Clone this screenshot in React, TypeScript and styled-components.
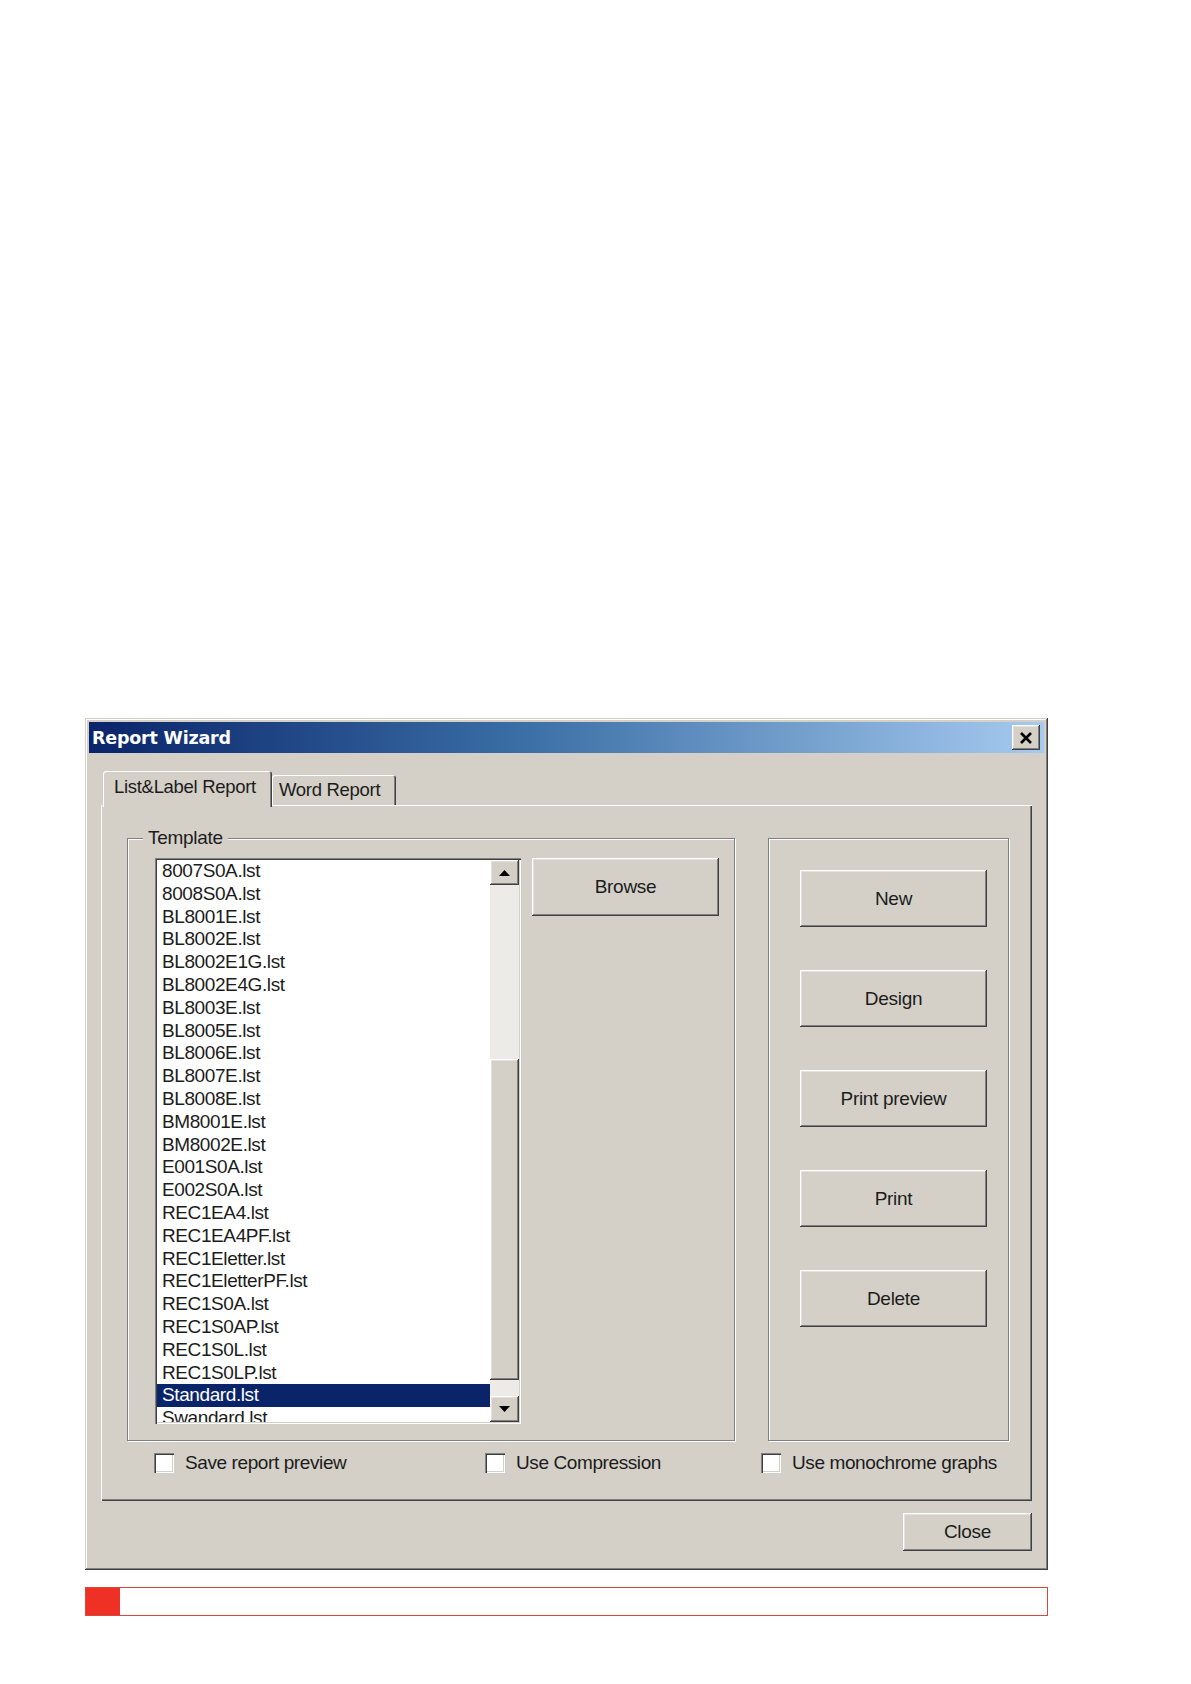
import React from 'react';
import styled, {createGlobalStyle} from 'styled-components';

const templates = [
    '8007S0A.lst',
    '8008S0A.lst',
    'BL8001E.lst',
    'BL8002E.lst',
    'BL8002E1G.lst',
    'BL8002E4G.lst',
    'BL8003E.lst',
    'BL8005E.lst',
    'BL8006E.lst',
    'BL8007E.lst',
    'BL8008E.lst',
    'BM8001E.lst',
    'BM8002E.lst',
    'E001S0A.lst',
    'E002S0A.lst',
    'REC1EA4.lst',
    'REC1EA4PF.lst',
    'REC1Eletter.lst',
    'REC1EletterPF.lst',
    'REC1S0A.lst',
    'REC1S0AP.lst',
    'REC1S0L.lst',
    'REC1S0LP.lst',
    'Standard.lst',
    'Swandard.lst',
];

const actions = ['New', 'Design', 'Print preview', 'Print', 'Delete'];

const raised = `
  background: #d4d0c8;
  box-shadow: inset -1px -1px 0 #404040, inset 1px 1px 0 #ffffff,
    inset -2px -2px 0 #808080, inset 2px 2px 0 #e4e1da;
`;

const GlobalStyle = createGlobalStyle`
  body {
    margin: 0;
    background: #ffffff;
    font-family: "Liberation Sans", Arial, sans-serif;
    color: #1c1c1c;
  }
`;

const Page = styled.div`
  padding: 718px 0 60px 85px;
`;

const Window = styled.div`
  width: 963px;
  box-sizing: border-box;
  padding: 4px;
  background: #d4d0c8;
  box-shadow: inset -1px -1px 0 #404040, inset 1px 1px 0 #d4d0c8,
    inset -2px -2px 0 #808080, inset 2px 2px 0 #ffffff;
`;

const TitleBar = styled.div`
  height: 31px;
  display: flex;
  align-items: center;
  justify-content: space-between;
  padding: 0 4px 0 3px;
  background: linear-gradient(90deg, #0a246a 0%, #3a6ea5 45%, #a6caf0 100%);
`;

const TitleText = styled.span`
  color: #ffffff;
  font-family: "DejaVu Sans", Verdana, sans-serif;
  font-weight: bold;
  font-size: 17.5px;
  letter-spacing: -0.2px;
`;

const CloseIcon = styled.div`
  ${raised};
  width: 28px;
  height: 25px;
  display: flex;
  align-items: center;
  justify-content: center;
`;

const Body = styled.div`
  padding: 18px 12px 15px 12px;
`;

const TabStrip = styled.div`
  position: relative;
  z-index: 1;
  display: flex;
  align-items: flex-end;
  height: 34px;
  padding-left: 2px;
`;

const Tab = styled.div<{$active?: boolean; $width: number; $pad: number}>`
  width: ${(p) => p.$width}px;
  height: ${(p) => (p.$active ? 36 : 30)}px;
  margin-bottom: ${(p) => (p.$active ? -2 : 0)}px;
  box-sizing: border-box;
  padding: ${(p) => (p.$active ? '0 0 4px' : '0 0 0')} ${(p) => p.$pad}px;
  display: flex;
  align-items: center;
  font-size: 18.5px;
  letter-spacing: -0.3px;
  background: #d4d0c8;
  border-radius: 3px 3px 0 0;
  box-shadow: inset 1px 1px 0 #ffffff, inset -1px 0 0 #404040,
    inset -2px 0 0 #808080;
`;

const TabPanel = styled.div`
  height: 696px;
  box-sizing: border-box;
  padding: 33px 23px 0 26px;
  box-shadow: inset 1px 1px 0 #ffffff, inset -1px -1px 0 #404040,
    inset -2px -2px 0 #808080;
`;

const GroupRow = styled.div`
  display: flex;
  gap: 33px;
`;

const GroupBox = styled.div<{$width: number}>`
  position: relative;
  width: ${(p) => p.$width}px;
  height: 603px;
  box-sizing: border-box;
  border: 1px solid #808080;
  box-shadow: inset 1px 1px 0 #ffffff, 1px 1px 0 #ffffff;
`;

const TemplateGroup = styled(GroupBox)`
  display: flex;
  align-items: flex-start;
  gap: 11px;
  padding: 19px 15px 0 27px;
`;

const ActionGroup = styled(GroupBox)`
  display: flex;
  flex-direction: column;
  align-items: center;
  gap: 43px;
  padding: 31px 0 0 10px;
`;

const GroupLabel = styled.span`
  position: absolute;
  top: -12px;
  left: 15px;
  padding: 0 5px;
  background: #d4d0c8;
  font-size: 19px;
  line-height: 22px;
  letter-spacing: -0.3px;
`;

const ListBox = styled.div`
  width: 366px;
  height: 566px;
  box-sizing: border-box;
  padding: 2px;
  display: flex;
  background: #ffffff;
  box-shadow: inset 1px 1px 0 #808080, inset 2px 2px 0 #404040,
    inset -1px -1px 0 #ffffff, inset -2px -2px 0 #d4d0c8;
`;

const ListItems = styled.div`
  flex: 1;
  overflow: hidden;
`;

const ListItem = styled.div<{$selected?: boolean}>`
  height: 22.8px;
  line-height: 22.8px;
  padding-left: 5px;
  font-size: 19px;
  letter-spacing: -0.4px;
  white-space: nowrap;
  background: ${(p) => (p.$selected ? '#0a246a' : 'transparent')};
  color: ${(p) => (p.$selected ? '#ffffff' : '#1c1c1c')};
`;

const ScrollBar = styled.div`
  width: 29px;
  display: flex;
  flex-direction: column;
`;

const ScrollButton = styled.div<{$height: number}>`
  ${raised};
  height: ${(p) => p.$height}px;
  flex-shrink: 0;
  display: flex;
  align-items: center;
  justify-content: center;
`;

const ScrollTrack = styled.div<{$height?: number}>`
  ${(p) => (p.$height ? `height: ${p.$height}px;` : 'flex: 1;')}
  background: #ecebe7;
`;

const ScrollThumb = styled.div`
  ${raised};
  height: 321px;
  flex-shrink: 0;
`;

const Button = styled.button<{$width: number; $height: number}>`
  ${raised};
  border: 0;
  margin: 0;
  padding: 0;
  flex-shrink: 0;
  width: ${(p) => p.$width}px;
  height: ${(p) => p.$height}px;
  font-family: "Liberation Sans", Arial, sans-serif;
  font-size: 19px;
  letter-spacing: -0.3px;
  color: #1c1c1c;
`;

const CheckRow = styled.div`
  display: flex;
  padding-left: 27px;
  margin-top: 11px;
`;

const CheckItem = styled.label<{$width?: number}>`
  display: flex;
  align-items: center;
  gap: 11px;
  ${(p) => (p.$width ? `width: ${p.$width}px;` : '')}
  font-size: 19px;
  letter-spacing: -0.4px;
`;

const CheckBox = styled.span`
  width: 20px;
  height: 20px;
  flex-shrink: 0;
  background: #ffffff;
  box-shadow: inset 1px 1px 0 #808080, inset 2px 2px 0 #404040,
    inset -1px -1px 0 #ffffff, inset -2px -2px 0 #d4d0c8;
`;

const Footer = styled.div`
  display: flex;
  justify-content: flex-end;
  padding-top: 12px;
`;

const RedBar = styled.div`
  width: 963px;
  height: 29px;
  margin-top: 17px;
  box-sizing: border-box;
  border: 1px solid #d9473f;
  display: flex;
`;

const RedBlock = styled.div`
  width: 34px;
  background: #ee3124;
`;

const Arrow = ({up}: {up?: boolean}) => (
    <svg width="11" height="6" viewBox="0 0 11 6">
        <polygon points={up ? '0,6 11,6 5.5,0' : '0,0 11,0 5.5,6'} fill="#000"/>
    </svg>
);

const App: React.FC = () => {
    return (
        <Page>
            <GlobalStyle/>
            <Window>
                <TitleBar>
                    <TitleText>Report Wizard</TitleText>
                    <CloseIcon>
                        <svg width="14" height="12" viewBox="0 0 14 12">
                            <path d="M2 1 L12 11 M12 1 L2 11" stroke="#000" strokeWidth="2.6"/>
                        </svg>
                    </CloseIcon>
                </TitleBar>
                <Body>
                    <TabStrip>
                        <Tab $active $width={169} $pad={11}>List&amp;Label Report</Tab>
                        <Tab $width={124} $pad={7}>Word Report</Tab>
                    </TabStrip>
                    <TabPanel>
                        <GroupRow>
                            <TemplateGroup $width={608}>
                                <GroupLabel>Template</GroupLabel>
                                <ListBox>
                                    <ListItems>
                                        {templates.map((name) => (
                                            <ListItem key={name} $selected={name === 'Standard.lst'}>
                                                {name}
                                            </ListItem>
                                        ))}
                                    </ListItems>
                                    <ScrollBar>
                                        <ScrollButton $height={25}><Arrow up/></ScrollButton>
                                        <ScrollTrack $height={174}/>
                                        <ScrollThumb/>
                                        <ScrollTrack/>
                                        <ScrollButton $height={26}><Arrow/></ScrollButton>
                                    </ScrollBar>
                                </ListBox>
                                <Button $width={187} $height={58}>Browse</Button>
                            </TemplateGroup>
                            <ActionGroup $width={241}>
                                {actions.map((label) => (
                                    <Button key={label} $width={187} $height={57}>{label}</Button>
                                ))}
                            </ActionGroup>
                        </GroupRow>
                        <CheckRow>
                            <CheckItem $width={331}><CheckBox/>Save report preview</CheckItem>
                            <CheckItem $width={276}><CheckBox/>Use Compression</CheckItem>
                            <CheckItem><CheckBox/>Use monochrome graphs</CheckItem>
                        </CheckRow>
                    </TabPanel>
                    <Footer>
                        <Button $width={129} $height={38}>Close</Button>
                    </Footer>
                </Body>
            </Window>
            <RedBar>
                <RedBlock/>
            </RedBar>
        </Page>
    );
};

export default App;
